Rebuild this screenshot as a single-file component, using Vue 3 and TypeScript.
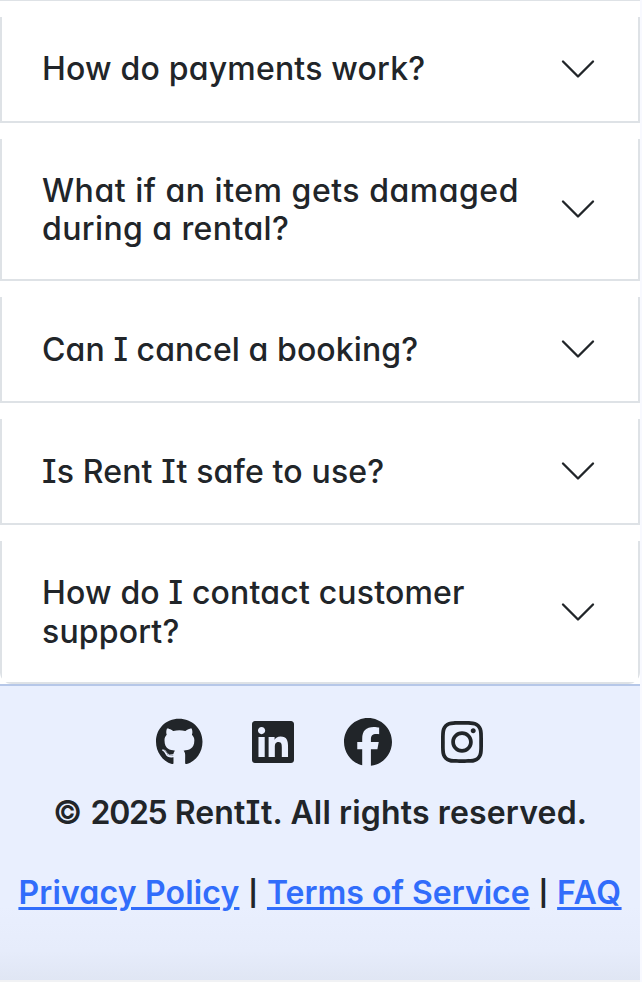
<script setup lang="ts">
interface Line {
  text: string
  tracking: number
}
interface Question {
  id: string
  lines: Line[]
}
interface Social {
  name: string
  width: number
  path: string
}

const questions: Question[] = [
  { id: 'payments', lines: [{ text: 'How do payments work?', tracking: 0.2 }] },
  {
    id: 'damage',
    lines: [
      { text: 'What if an item gets damaged', tracking: 0.52 },
      { text: 'during a rental?', tracking: 0.4 },
    ],
  },
  { id: 'cancel', lines: [{ text: 'Can I cancel a booking?', tracking: 0.09 }] },
  { id: 'safety', lines: [{ text: 'Is Rent It safe to use?', tracking: 0.16 }] },
  {
    id: 'support',
    lines: [
      { text: 'How do I contact customer', tracking: 0.18 },
      { text: 'support?', tracking: 0.17 },
    ],
  },
]

const socials: Social[] = [
  {
    name: 'GitHub',
    width: 496,
    path: 'M165.9 397.4c0 2-2.3 3.6-5.2 3.6-3.3.3-5.6-1.3-5.6-3.6 0-2 2.3-3.6 5.2-3.6 3-.3 5.6 1.3 5.6 3.6zm-31.1-4.5c-.7 2 1.3 4.3 4.3 4.9 2.6 1 5.6 0 6.2-2s-1.3-4.3-4.3-5.2c-2.6-.7-5.5.3-6.2 2.3zm44.2-1.7c-2.9.7-4.9 2.6-4.6 4.9.3 2 2.9 3.3 5.9 2.6 2.9-.7 4.9-2.6 4.6-4.6-.3-1.9-3-3.2-5.9-2.9zM244.8 8C106.1 8 0 113.3 0 252c0 110.9 69.8 205.8 169.5 239.2 12.8 2.3 17.3-5.6 17.3-12.1 0-6.2-.3-40.4-.3-61.4 0 0-70 15-84.7-29.8 0 0-11.4-29.1-27.8-36.6 0 0-22.9-15.7 1.6-15.4 0 0 24.9 2 38.6 25.8 21.9 38.6 58.6 27.5 72.9 20.9 2.3-16 8.8-27.1 16-33.7-55.9-6.2-112.3-14.3-112.3-110.5 0-27.5 7.6-41.3 23.6-58.9-2.6-6.5-11.1-33.3 2.6-67.9 20.9-6.5 69 27 69 27 20-5.6 41.5-8.5 62.8-8.5s42.8 2.9 62.8 8.5c0 0 48.1-33.6 69-27 13.7 34.7 5.2 61.4 2.6 67.9 16 17.7 25.8 31.5 25.8 58.9 0 96.5-58.9 104.2-114.8 110.5 9.2 7.9 17 22.9 17 46.4 0 33.7-.3 75.4-.3 83.6 0 6.5 4.6 14.4 17.3 12.1C428.2 457.8 496 362.9 496 252 496 113.3 383.5 8 244.8 8zM97.2 352.9c-1.3 1-1 3.3.7 5.2 1.6 1.6 3.9 2.3 5.2 1 1.3-1 1-3.3-.7-5.2-1.6-1.6-3.9-2.3-5.2-1zm-10.8-8.1c-.7 1.3.3 2.9 2.3 3.9 1.6 1 3.6.7 4.3-.7.7-1.3-.3-2.9-2.3-3.9-2-.6-3.6-.3-4.3.7zm32.4 35.6c-1.6 1.3-1 4.3 1.3 6.2 2.3 2.3 5.2 2.6 6.5 1 1.3-1.3.7-4.3-1.3-6.2-2.2-2.3-5.2-2.6-6.5-1zm-11.4-14.7c-1.6 1-1.6 3.6 0 5.9 1.6 2.3 4.3 3.3 5.6 2.3 1.6-1.3 1.6-3.9 0-6.2-1.4-2.3-4-3.3-5.6-2z',
  },
  {
    name: 'LinkedIn',
    width: 448,
    path: 'M416 32H31.9C14.3 32 0 46.5 0 64.3v383.4C0 465.5 14.3 480 31.9 480H416c17.6 0 32-14.5 32-32.3V64.3c0-17.8-14.4-32.3-32-32.3zM135.4 416H69V202.2h66.5V416zm-33.2-243c-21.3 0-38.5-17.3-38.5-38.5S80.9 96 102.2 96c21.2 0 38.5 17.3 38.5 38.5 0 21.3-17.2 38.5-38.5 38.5zm282.1 243h-66.4V312c0-24.8-.5-56.7-34.5-56.7-34.6 0-39.9 27-39.9 54.9V416h-66.4V202.2h63.7v29.2h.9c8.9-16.8 30.6-34.5 62.9-34.5 67.2 0 79.7 44.3 79.7 101.9V416z',
  },
  {
    name: 'Facebook',
    width: 512,
    path: 'M512 256C512 114.6 397.4 0 256 0S0 114.6 0 256c0 120 82.7 220.8 194.2 248.5V334.2h-52.8V256h52.8v-33.7c0-87.1 39.4-127.5 125-127.5 16.2 0 44.2 3.2 55.7 6.4V172c-6-.6-16.5-1-29.6-1-42 0-58.2 15.9-58.2 57.2V256h83.6l-14.4 78.2H287v175.9C413.8 494.8 512 386.9 512 256z',
  },
  {
    name: 'Instagram',
    width: 448,
    path: 'M224.1 141c-63.6 0-114.9 51.3-114.9 114.9s51.3 114.9 114.9 114.9S339 319.5 339 255.9 287.7 141 224.1 141zm0 189.6c-41.1 0-74.7-33.5-74.7-74.7s33.5-74.7 74.7-74.7 74.7 33.5 74.7 74.7-33.6 74.7-74.7 74.7zm146.4-194.3c0 14.9-12 26.8-26.8 26.8-14.9 0-26.8-12-26.8-26.8s12-26.8 26.8-26.8 26.8 12 26.8 26.8zm76.1 27.2c-1.7-35.9-9.9-67.7-36.2-93.9-26.2-26.2-58-34.4-93.9-36.2-37-2.1-147.9-2.1-184.9 0-35.8 1.7-67.6 9.9-93.9 36.1s-34.4 58-36.2 93.9c-2.1 37-2.1 147.9 0 184.9 1.7 35.9 9.9 67.7 36.2 93.9s58 34.4 93.9 36.2c37 2.1 147.9 2.1 184.9 0 35.9-1.7 67.7-9.9 93.9-36.2 26.2-26.2 34.4-58 36.2-93.9 2.1-37 2.1-147.8 0-184.8zM398.8 388c-7.8 19.6-22.9 34.7-42.6 42.6-29.5 11.7-99.5 9-132.1 9s-102.7 2.6-132.1-9c-19.6-7.8-34.7-22.9-42.6-42.6-11.7-29.5-9-99.5-9-132.1s-2.6-102.7 9-132.1c7.8-19.6 22.9-34.7 42.6-42.6 29.5-11.7 99.5-9 132.1-9s102.7-2.6 132.1 9c19.6 7.8 34.7 22.9 42.6 42.6 11.7 29.5 9 99.5 9 132.1s2.7 102.7-9 132.1z',
  },
]
</script>

<template>
  <div class="page">
    <main class="faq">
      <section v-for="q in questions" :key="q.id" class="item">
        <h2 class="title">
          <span
            v-for="line in q.lines"
            :key="line.text"
            class="line"
            :style="{ letterSpacing: line.tracking + 'px' }"
          >{{ line.text }}</span>
        </h2>
        <svg class="chevron" viewBox="0 0 16 16" aria-hidden="true">
          <path d="m2 5 6 6 6-6" />
        </svg>
      </section>
    </main>

    <footer class="footer">
      <div class="socials">
        <svg
          v-for="s in socials"
          :key="s.name"
          :viewBox="`0 0 ${s.width} 512`"
          :width="(s.width * 48) / 512"
          height="48"
          aria-hidden="true"
        >
          <path :d="s.path" />
        </svg>
      </div>
      <p class="copyright">© <span class="year">2025</span> RentIt. All rights reserved.</p>
      <nav class="links">
        <a class="privacy" href="#">Privacy Policy</a>
        <span class="divider">|</span>
        <a class="terms" href="#">Terms of Service</a>
        <span class="divider">|</span>
        <a class="help" href="#">FAQ</a>
      </nav>
    </footer>
  </div>
</template>

<style>
body {
  background: #f8f9ff;
}
</style>

<style scoped>
.page {
  box-sizing: border-box;
  width: 640px;
  height: 982px;
  overflow: hidden;
  background: #f1f2f4;
  color: #212529;
  font-family: Inter, "Noto Sans", sans-serif;
  font-size: 32px;
  font-feature-settings: "cv11" 1, "cv08" 1;
}

.faq {
  box-sizing: border-box;
  display: flex;
  flex-direction: column;
  gap: 16px;
  height: 684px;
  padding-top: 16px;
  border-top: 1px solid #dee2e6;
  background: #fff;
}

.item {
  box-sizing: border-box;
  display: flex;
  align-items: center;
  justify-content: space-between;
  height: 106px;
  padding: 0 40px;
  border: 2px solid #dee2e6;
  border-top: 0;
}

.item:nth-child(2) {
  height: 142px;
}

.item:last-child {
  height: 143px;
  clip-path: inset(0 round 0 0 12px 12px);
}

.title {
  margin: 0;
  font-size: inherit;
  font-weight: 500;
  line-height: 38.4px;
}

.item:not(:first-child) .title {
  padding-top: 2px;
}

.line {
  display: block;
  white-space: nowrap;
}

.chevron {
  flex: none;
  width: 40px;
  height: 40px;
  fill: none;
  stroke: #212529;
  stroke-width: 0.95;
  stroke-linecap: round;
  stroke-linejoin: round;
}

.footer {
  box-sizing: border-box;
  height: 296px;
  padding-top: 32px;
  border-top: 2px solid #b6c7e8;
  background: linear-gradient(#e9effe 0, #e9effe 75%, #e6ecfb 90%, #e0e6f4 100%);
  font-weight: 600;
}

.socials {
  display: flex;
  justify-content: center;
  gap: 49.5px;
  height: 48px;
  padding-right: 1px;
  fill: #212529;
}

.copyright {
  margin: 23px 0 0;
  line-height: 48px;
  text-align: center;
  letter-spacing: 0.15px;
}

.year {
  letter-spacing: -1.3px;
}

.links {
  display: flex;
  justify-content: center;
  margin-top: 32px;
  line-height: 48px;
}

.links a {
  color: #316dfb;
  text-decoration: underline;
  text-decoration-thickness: 3px;
  text-underline-offset: 3px;
}

.privacy {
  letter-spacing: 0.17px;
}

.links .help {
  letter-spacing: 0.6px;
}

.divider {
  width: 27.5px;
  text-align: center;
  font-size: 25px;
  font-weight: 700;
}
</style>
